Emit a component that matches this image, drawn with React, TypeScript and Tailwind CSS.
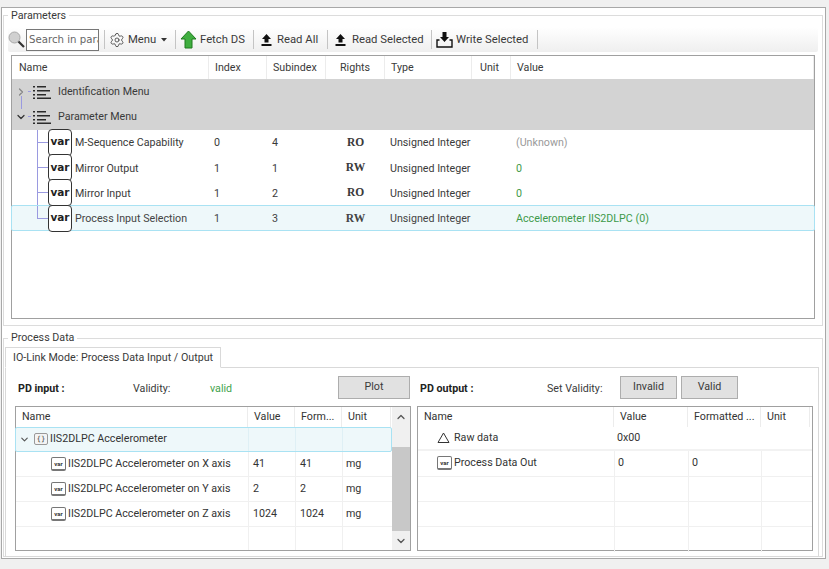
import { ChevronDown, ChevronRight, ChevronUp, Settings } from "lucide-react";

const paramCols = "grid grid-cols-[197px_58px_59px_59px_87px_39px_1fr]";
const pdInCols = "grid grid-cols-[232px_47px_47px_49px]";
const pdOutCols = "grid grid-cols-[196px_74px_73px_49px_1fr]";

const params = [
  { name: "M-Sequence Capability", index: "0", sub: "4", rights: "RO", value: "(Unknown)", muted: true },
  { name: "Mirror Output", index: "1", sub: "1", rights: "RW", value: "0" },
  { name: "Mirror Input", index: "1", sub: "2", rights: "RO", value: "0" },
  { name: "Process Input Selection", index: "1", sub: "3", rights: "RW", value: "Accelerometer IIS2DLPC (0)", selected: true },
];

const axes = [
  { axis: "X", value: "41" },
  { axis: "Y", value: "2" },
  { axis: "Z", value: "1024" },
];

const ListIcon = () => (
  <svg width="18" height="14" viewBox="0 0 18 14" className="shrink-0" fill="#2b2b2b">
    <rect x="0" y="1" width="2" height="1.5" />
    <rect x="4" y="1" width="9" height="1.5" />
    <rect x="0" y="5" width="2" height="1.5" />
    <rect x="4" y="5" width="13" height="1.5" />
    <rect x="0" y="9" width="2" height="1.5" />
    <rect x="4" y="9" width="9" height="1.5" />
    <rect x="0" y="12.5" width="2" height="1.5" />
    <rect x="4" y="12.5" width="14" height="1.5" />
  </svg>
);

const SearchIcon = () => (
  <svg width="17" height="18" viewBox="0 0 17 18" className="shrink-0">
    <circle cx="6.5" cy="6.5" r="5.5" fill="#d0d0d0" stroke="#a8a8a8" />
    <path d="M10.5 10.5 L16 16" stroke="#333" strokeWidth="2.2" />
  </svg>
);

const FetchIcon = () => (
  <svg width="17" height="19" viewBox="0 0 17 19" className="shrink-0">
    <path d="M8.5 1 L16 9 H12 V18 H5 V9 H1 Z" fill="#3fae3f" stroke="#1f7a1f" />
  </svg>
);

const UploadIcon = () => (
  <svg width="11" height="12" viewBox="0 0 11 12" className="shrink-0" fill="#111">
    <path d="M5.5 0 L10 5 H7.5 V8.5 H3.5 V5 H1 Z" />
    <rect x="0.5" y="10" width="10" height="2" />
  </svg>
);

const WriteIcon = () => (
  <svg width="17" height="16" viewBox="0 0 17 16" className="shrink-0">
    <path d="M6.5 0 H10.5 V5 H13 L8.5 10 L4 5 H6.5 Z" fill="#111" />
    <path d="M3.5 8 H1 V15 H16 V8 H13.5" fill="none" stroke="#111" strokeWidth="1.4" />
  </svg>
);

const Sep = ({ className }: { className: string }) => <span className={`block h-[19px] w-px shrink-0 bg-[#c4c4c4] ${className}`} />;

const VarBig = () => (
  <span className="relative z-10 -my-[2px] flex h-[27px] w-[24px] shrink-0 items-center justify-center rounded-[4px] border border-[#333] bg-white text-[10.5px] font-bold text-[#222] font-['DejaVu_Sans',sans-serif]">
    var
  </span>
);

const VarSmall = () => (
  <span className="flex h-[14px] w-[15px] shrink-0 items-center justify-center rounded-[2px] border border-[#777] border-b-2 bg-white text-[6px] font-bold text-[#333]">
    var
  </span>
);

const ToolItem = ({ icon, label, className }: { icon: React.ReactNode; label: string; className: string }) => (
  <div className={`flex items-center whitespace-nowrap ${className}`}>
    {icon}
    <span className="pt-[2px]">{label}</span>
  </div>
);

const ParamRow = ({ p, i }: { p: (typeof params)[number]; i: number }) => (
  <div
    className={`${paramCols} relative h-[25.3px] items-center whitespace-nowrap ${
      p.selected ? "-mx-px rounded-[2px] border border-[#a9e2f3] bg-[#eef8fa] text-[#444]" : ""
    }`}
  >
    <span className={`absolute left-[25px] top-0 w-px bg-[#9a9ae0] ${i === 3 ? "h-[12px]" : "h-full"}`} />
    <span className="absolute left-[25px] top-[12px] h-px w-[11px] bg-[#9a9ae0]" />
    <div className="flex items-center gap-[3px] pl-[36px]">
      <VarBig />
      <span className="pt-[2px]">{p.name}</span>
    </div>
    <span className="pl-[5px] pt-[2px]">{p.index}</span>
    <span className="pl-[5px] pt-[2px]">{p.sub}</span>
    <span className="text-center font-['Liberation_Serif',serif] text-[11.5px] font-bold">{p.rights}</span>
    <span className="pl-[5px] pt-[2px]">Unsigned Integer</span>
    <span />
    <span className={`pl-[5px] pt-[2px] ${p.muted ? "text-[#9a9a9a]" : "text-[#3f9a4a]"}`}>{p.value}</span>
  </div>
);

const MenuRow = ({ open, label }: { open: boolean; label: string }) => (
  <div className="relative flex h-[25.3px] items-center bg-[#d3d3d3] pl-[3px]">
    {open && <span className="absolute -top-[8px] left-[9px] h-[13px] w-px bg-[#9a9ae0]" />}
    {open ? (
      <ChevronDown size={12} strokeWidth={2.5} className="text-[#333]" />
    ) : (
      <ChevronRight size={12} strokeWidth={2.5} className="text-[#888]" />
    )}
    <span className="ml-[1px] mr-[2px] h-px w-[3px] bg-[#9a9ae0]" />
    <ListIcon />
    <span className="ml-[7px]">{label}</span>
  </div>
);

const Btn = ({ label, className }: { label: string; className: string }) => (
  <div className={`flex h-[23px] items-center justify-center border border-[#adadad] bg-[#e1e1e1] ${className}`}>
    {label}
  </div>
);

export default function App() {
  return (
    <div className="h-[569px] w-[829px] overflow-hidden bg-[#f0f0f0] pl-px pr-[3px] pt-[7px] text-[10.7px] text-[#3a3a3a] font-['Roboto',sans-serif]">
      <div className="flex h-[552px] flex-col border border-[#a8a8a8] bg-white pl-px pr-[2px] pt-[7px]">
        {/* Parameters */}
        <div className="relative h-[311px] shrink-0 border border-[#dcdcdc] pl-[4px] pr-[4px] pt-[11px]">
          <span className="absolute left-[4px] -top-[8px] bg-white px-[3px]">Parameters</span>
          <div className="flex h-[25px] items-center rounded-[2px] bg-gradient-to-b from-white to-[#efefef] text-[11.3px]">
            <SearchIcon />
            <div className="ml-[1px] flex h-[22px] w-[73px] items-center overflow-hidden whitespace-nowrap border border-[#777] bg-white pl-[2px] text-[10.2px] text-[#666] font-['DejaVu_Sans',sans-serif]">
              Search in para
            </div>
            <Sep className="ml-[5px]" />
            <ToolItem icon={<Settings size={16} strokeWidth={1.2} />} label="Menu" className="ml-[4px] w-[52px] gap-[3px]" />
            <svg width="6" height="4" viewBox="0 0 6 4" className="shrink-0" fill="#333"><path d="M0 0 H6 L3 3.5 Z" /></svg>
            <Sep className="ml-[8px]" />
            <ToolItem icon={<FetchIcon />} label="Fetch DS" className="ml-[4px] w-[68px] gap-[3px]" />
            <Sep className="ml-[5px]" />
            <ToolItem icon={<UploadIcon />} label="Read All" className="ml-[7px] w-[57px] gap-[5px]" />
            <Sep className="ml-[9px]" />
            <ToolItem icon={<UploadIcon />} label="Read Selected" className="ml-[7px] w-[88px] gap-[6px]" />
            <Sep className="ml-[8px]" />
            <ToolItem icon={<WriteIcon />} label="Write Selected" className="ml-[4px] w-[91px] gap-[3px]" />
            <Sep className="ml-[10px]" />
          </div>
          <div className="ml-[3px] mr-[3px] mt-[3px] h-[264px] border border-[#a0a0a0] bg-white">
            <div className={`${paramCols} h-[23px] items-center`}>
              {["Name", "Index", "Subindex", "Rights", "Type", "Unit", "Value"].map((h, i) => (
                <span
                  key={h}
                  className={`flex h-full items-center border-r border-[#ececec] pt-[2px] ${i === 3 ? "justify-center" : i === 0 ? "pl-[7px]" : "pl-[6px]"} ${i === 5 ? "pl-[8px]" : ""}`}
                >
                  {h}
                </span>
              ))}
            </div>
            <MenuRow open={false} label="Identification Menu" />
            <MenuRow open label="Parameter Menu" />
            {params.map((p, i) => (
              <ParamRow key={p.name} p={p} i={i} />
            ))}
          </div>
        </div>

        {/* Process Data */}
        <div className="relative mt-[12px] h-[219px] shrink-0 border border-[#dcdcdc] pl-[1px] pr-[3px] pt-[8px]">
          <span className="absolute left-[4px] -top-[9px] bg-white px-[3px]">Process Data</span>
          <div className="relative z-10 -mb-px flex h-[21px] w-[216px] items-center whitespace-nowrap border border-[#d9d9d9] border-b-white bg-white pl-[7px] pt-[2px]">
            IO-Link Mode: Process Data Input / Output
          </div>
          <div className="h-[190px] border border-[#d9d9d9] pl-[12px] pr-[5px] pt-[8px]">
            <div className="flex h-[23px] items-center whitespace-nowrap">
              <span className="w-[115px] pt-[3px] font-bold text-[#222]">PD input :</span>
              <span className="w-[77px] pt-[3px]">Validity:</span>
              <span className="w-[128px] pt-[3px] text-[#3fa34d]">valid</span>
              <Btn label="Plot" className="w-[72px]" />
              <span className="ml-[10px] w-[127px] pt-[3px] font-bold text-[#222]">PD output :</span>
              <span className="w-[73px] pt-[3px]">Set Validity:</span>
              <Btn label="Invalid" className="w-[57px]" />
              <Btn label="Valid" className="ml-[4px] w-[57px]" />
            </div>
            <div className="-ml-[3px] mt-[7px] flex h-[145px] gap-[6px] whitespace-nowrap">
              {/* left table */}
              <div className="flex w-[396px] border border-[#a0a0a0] bg-white">
                <div className="flex-1 text-[#333]">
                  <div className={`${pdInCols} h-[20px] items-center`}>
                    {["Name", "Value", "Form...", "Unit"].map((h) => (
                      <span key={h} className="flex h-full items-center border-r border-[#ececec] pl-[6px]">{h}</span>
                    ))}
                  </div>
                  <div className={`${pdInCols} -ml-px h-[25px] items-center rounded-[2px] border border-[#a9e2f3] bg-[#eef8fa]`}>
                    <div className="flex items-center pl-[3px]">
                      <ChevronDown size={11} strokeWidth={2.5} className="text-[#555]" />
                      <span className="ml-[4px] mr-[2px] flex h-[12px] w-[14px] items-center justify-center rounded-[2px] border border-[#999] bg-[#f4f4f4] text-[7px] font-['DejaVu_Sans',sans-serif]">{"{}"}</span>
                      <span>IIS2DLPC Accelerometer</span>
                    </div>
                    <span className="h-full border-l border-[#dff0f5]" />
                    <span className="h-full border-l border-[#dff0f5]" />
                    <span className="h-full border-l border-[#dff0f5]" />
                  </div>
                  {axes.map((a) => (
                    <div key={a.axis} className={`${pdInCols} h-[25px] items-center border-b border-[#f0f0f0]`}>
                      <div className="flex items-center gap-[2px] pl-[35px]">
                        <VarSmall />
                        <span>IIS2DLPC Accelerometer on {a.axis} axis</span>
                      </div>
                      <span className="flex h-full items-center border-l border-[#f0f0f0] pl-[4px]">{a.value}</span>
                      <span className="flex h-full items-center border-l border-[#f0f0f0] pl-[4px]">{a.value}</span>
                      <span className="flex h-full items-center border-l border-[#f0f0f0] pl-[3px]">mg</span>
                    </div>
                  ))}
                  <div className={`${pdInCols} h-[23px]`}>
                    <span />
                    <span className="border-l border-[#f0f0f0]" />
                    <span className="border-l border-[#f0f0f0]" />
                    <span className="border-l border-[#f0f0f0]" />
                  </div>
                </div>
                <div className="flex w-[18px] flex-col items-center bg-[#f0f0f0]">
                  <div className="flex h-[20px] items-center"><ChevronUp size={12} strokeWidth={2.5} className="text-[#555]" /></div>
                  <div className="mt-[20px] h-[84px] w-full bg-[#c8c8c8]" />
                  <div className="mt-auto flex h-[19px] items-center"><ChevronDown size={12} strokeWidth={2.5} className="text-[#555]" /></div>
                </div>
              </div>
              {/* right table */}
              <div className="w-[396px] border border-[#a0a0a0] bg-white text-[#333]">
                <div className={`${pdOutCols} h-[20px] items-center`}>
                  {["Name", "Value", "Formatted ...", "Unit", ""].map((h, i) => (
                    <span key={i} className="flex h-full items-center border-r border-[#ececec] pl-[6px] last:border-r-0">{h}</span>
                  ))}
                </div>
                <div className={`${pdOutCols} h-[24px] items-center border-b-2 border-[#f2f2f2]`}>
                  <div className="flex items-center gap-[4px] pl-[19px]">
                    <svg width="13" height="11" viewBox="0 0 13 11" fill="none" stroke="#333"><path d="M6.5 1 L12 10.5 H1 Z" /></svg>
                    <span>Raw data</span>
                  </div>
                  <span className="pl-[3px]">0x00</span>
                  <span />
                  <span />
                  <span />
                </div>
                <div className={`${pdOutCols} h-[26px] items-center border-b border-[#f0f0f0]`}>
                  <div className="flex items-center gap-[2px] pl-[19px]">
                    <VarSmall />
                    <span>Process Data Out</span>
                  </div>
                  <span className="flex h-full items-center border-l border-[#f0f0f0] pl-[3px]">0</span>
                  <span className="flex h-full items-center border-l border-[#f0f0f0] pl-[3px]">0</span>
                  <span className="h-full border-l border-[#f0f0f0]" />
                  <span />
                </div>
                {[0, 1, 2].map((r) => (
                  <div key={r} className={`${pdOutCols} h-[25px] border-b border-[#f0f0f0] last:border-b-0`}>
                    <span />
                    <span className="border-l border-[#f0f0f0]" />
                    <span className="border-l border-[#f0f0f0]" />
                    <span className="border-l border-[#f0f0f0]" />
                    <span />
                  </div>
                ))}
              </div>
            </div>
          </div>
        </div>
      </div>
    </div>
  );
}
